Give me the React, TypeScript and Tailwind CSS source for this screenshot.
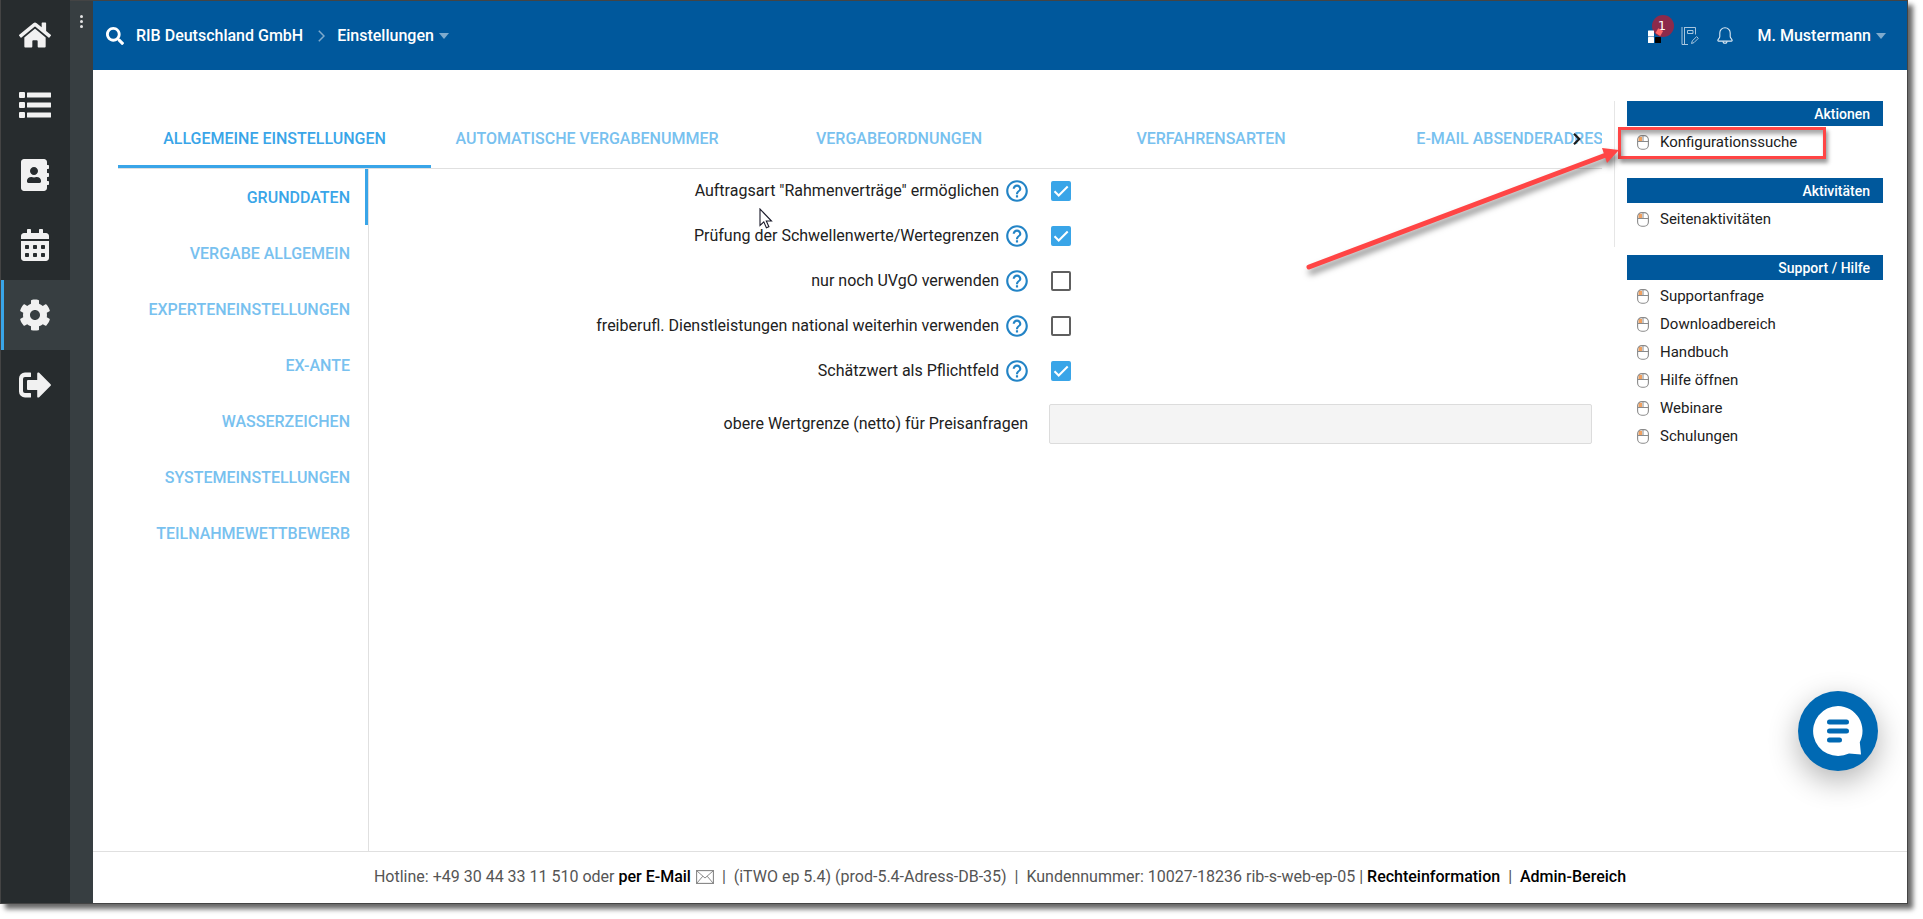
import React, { useState } from 'react';
import { FaAddressBook, FaCalendarAlt, FaCog, FaHome, FaSearch } from 'react-icons/fa';

const ListIcon: React.FC = () => (
  <svg className="size-8" viewBox="0 0 32 32" fill="currentColor">
    <rect x="0" y="3" width="6" height="6" rx="1" />
    <rect x="0" y="13" width="6" height="6" rx="1" />
    <rect x="0" y="23" width="6" height="6" rx="1" />
    <rect x="8" y="3.5" width="24" height="5" rx="0.5" />
    <rect x="8" y="13.5" width="24" height="5" rx="0.5" />
    <rect x="8" y="23.5" width="24" height="5" rx="0.5" />
  </svg>
);

const SignOutIcon: React.FC = () => (
  <svg className="size-8" viewBox="0 0 32 32" fill="currentColor">
    <path d="M12 4v3.400a.6.6 0 0 1-.6.6H6a2 2 0 0 0-2 2v12a2 2 0 0 0 2 2h5.400a.6.6 0 0 1 .6.6V28a.6.6 0 0 1-.6.6H6a6 6 0 0 1-6-6V9.400a6 6 0 0 1 6-6h5.400a.6.6 0 0 1 .6.6z" />
    <path d="M18.200 4.600v6.400H9a1 1 0 0 0-1 1v8a1 1 0 0 0 1 1h9.200v6.400c0 1.200 1.300 1.600 2 .8L31.600 16.800a1.200 1.200 0 0 0 0-1.600L20.200 3.800c-.7-.8-2-.4-2 .8z" />
  </svg>
);

const HelpIcon: React.FC = () => (
  <svg className="size-[26px]" viewBox="0 0 24 24" fill="currentColor">
    <path d="M11 18h2v-2h-2v2zm1-16C6.480 2 2 6.480 2 12s4.480 10 10 10 10-4.480 10-10S17.520 2 12 2zm0 18c-4.410 0-8-3.590-8-8s3.590-8 8-8 8 3.590 8 8-3.590 8-8 8zm0-14c-2.210 0-4 1.790-4 4h2c0-1.100.9-2 2-2s2 .9 2 2c0 2-3 1.750-3 5h2c0-2.250 3-2.500 3-5 0-2.210-1.790-4-4-4z" />
  </svg>
);

const MouseIcon: React.FC = () => (
  <svg className="h-[15px] w-3 shrink-0" viewBox="0 0 12 15" fill="none">
    <path d="M1.500 1.800H5V6H1.500z" fill="#f0a060" />
    <rect x="0.6" y="0.6" width="10.800" height="13.600" rx="4.200" stroke="#8a8a8a" strokeWidth="1.100" />
    <path d="M.6 6.500h10.800M6 .6v5.900" stroke="#8a8a8a" />
  </svg>
);

const AppsIcon: React.FC = () => (
  <svg className="h-7 w-[26px]" viewBox="0 0 26 28">
    <circle cx="15" cy="11" r="11" fill="#8c2a4b" />
    <rect x="0" y="15.500" width="6" height="6" rx="0.5" fill="#fff" />
    <rect x="0" y="22" width="6" height="6" rx="0.5" fill="#fff" />
    <rect x="7" y="22" width="6" height="6" rx="0.5" fill="#000" />
    <text x="14" y="15" textAnchor="middle" fontSize="13" fill="#fff" className="font-['DejaVu_Sans',sans-serif] font-normal">1</text>
    <rect x="8.500" y="14.300" width="5.600" height="5.600" transform="rotate(30 11.300 17.100)" fill="#ff6a6a" />
  </svg>
);

const NotebookIcon: React.FC = () => (
  <svg className="h-[18px] w-[18px]" viewBox="0 0 18 18" fill="none" stroke="#a9c6de">
    <path d="M1 0v17.500H7M3.500 0v17.500M3.500.5H14.500v7" />
    <path d="M6.500 3.500h5.500v3H6.500z" />
    <path d="M10.500 16.500l.8-2.600 4.300-4.300 1.700 1.700-4.300 4.300z" />
  </svg>
);

const BellIcon: React.FC = () => (
  <svg className="h-[18px] w-4" viewBox="0 0 16 18" fill="none" stroke="#dbe8f2" strokeWidth="1.100">
    <path d="M8 .8C4.800.8 2.800 3.200 2.800 6v3.500c0 1.600-2 2.600-2 4 0 .4.300.6.700.6h13c.4 0 .7-.2.7-.6 0-1.400-2-2.400-2-4V6C13.200 3.200 11.200.8 8 .8z" />
    <path d="M6 14.300a2 2 0 0 0 4 0" />
  </svg>
);

const Caret: React.FC = () => <span className="border-x-5 border-t-6 border-x-transparent border-t-[#7fabcd]" />;

const navItems = [
  { label: 'Startseite', icon: <FaHome className="size-8" /> },
  { label: 'Liste', icon: <ListIcon /> },
  { label: 'Adressbuch', icon: <FaAddressBook className="size-8" /> },
  { label: 'Kalender', icon: <FaCalendarAlt className="size-8" /> },
  { label: 'Einstellungen', icon: <FaCog className="size-8" />, active: true },
  { label: 'Abmelden', icon: <SignOutIcon /> },
];

const tabs = [
  'ALLGEMEINE EINSTELLUNGEN',
  'AUTOMATISCHE VERGABENUMMER',
  'VERGABEORDNUNGEN',
  'VERFAHRENSARTEN',
  'E-MAIL ABSENDERADRESSE',
];

const sections = [
  'GRUNDDATEN',
  'VERGABE ALLGEMEIN',
  'EXPERTENEINSTELLUNGEN',
  'EX-ANTE',
  'WASSERZEICHEN',
  'SYSTEMEINSTELLUNGEN',
  'TEILNAHMEWETTBEWERB',
];

const options = [
  { id: 'rahmen', label: 'Auftragsart "Rahmenverträge" ermöglichen', checked: true },
  { id: 'schwellen', label: 'Prüfung der Schwellenwerte/Wertegrenzen', checked: true },
  { id: 'uvgo', label: 'nur noch UVgO verwenden', checked: false },
  { id: 'freiberufl', label: 'freiberufl. Dienstleistungen national weiterhin verwenden', checked: false },
  { id: 'schaetzwert', label: 'Schätzwert als Pflichtfeld', checked: true },
];

const groups = [
  { title: 'Aktionen', links: ['Konfigurationssuche'], style: 'h-[77px] border-l border-[#e6e6e6] pl-3' },
  { title: 'Aktivitäten', links: ['Seitenaktivitäten'], style: 'mb-2 h-[69px] border-l border-[#e6e6e6] pl-3' },
  {
    title: 'Support / Hilfe',
    links: ['Supportanfrage', 'Downloadbereich', 'Handbuch', 'Hilfe öffnen', 'Webinare', 'Schulungen'],
    style: 'pl-[13px]',
  },
];

const Sidebar: React.FC = () => (
  <>
    <nav className="-mt-px w-[69px] shrink-0 bg-[#272c2e]">
      {navItems.map((item) => (
        <a
          key={item.label}
          href="#"
          aria-label={item.label}
          className={
            item.active
              ? 'flex h-[70px] items-center justify-center border-l-3 border-[#39a5e8] bg-[#373e41] pr-1 text-[#f1f1f1]'
              : 'flex h-[70px] items-center justify-center pr-px text-[#f1f1f1]'
          }
        >
          {item.icon}
        </a>
      ))}
    </nav>
    <div className="w-[23px] shrink-0 bg-[#373e41]">
      <button type="button" aria-label="Menü" className="flex w-full flex-col items-center gap-[2px] pt-[14px]">
        <span className="size-[3px] rounded-full bg-[#e4e4e4]" />
        <span className="size-[3px] rounded-full bg-[#e4e4e4]" />
        <span className="size-[3px] rounded-full bg-[#e4e4e4]" />
      </button>
    </div>
  </>
);

const Header: React.FC = () => (
  <header className="flex h-[69px] shrink-0 items-center justify-between bg-[#00589c] pr-[21px] pl-[13px] font-medium text-white">
    <div className="flex items-center">
      <button type="button" aria-label="Suche">
        <FaSearch className="size-[18px]" />
      </button>
      <a href="#" className="ml-3">RIB Deutschland GmbH</a>
      <svg className="mr-3 ml-[15px] h-3 w-[7px]" viewBox="0 0 7 12" fill="none" stroke="#7fabcd" strokeWidth="1.500">
        <path d="M.8.8L6 6 .8 11.200" />
      </svg>
      <button type="button" className="flex items-center gap-[5px]">
        Einstellungen
        <Caret />
      </button>
    </div>
    <div className="flex items-center">
      <button type="button" aria-label="Anwendungen" className="mr-[7px] -mt-[14px]">
        <AppsIcon />
      </button>
      <button type="button" aria-label="Protokoll" className="mr-[18px]">
        <NotebookIcon />
      </button>
      <button type="button" aria-label="Benachrichtigungen" className="mr-[25px]">
        <BellIcon />
      </button>
      <button type="button" className="flex items-center gap-[5px]">
        M. Mustermann
        <Caret />
      </button>
    </div>
  </header>
);

const TabBar: React.FC = () => (
  <div className="relative mt-[39px] flex h-[60px] shrink-0 overflow-hidden border-b border-[#e0e0e0]">
    {tabs.map((tab, i) => (
      <button
        key={tab}
        type="button"
        className={
          i === 0
            ? 'w-[313px] shrink-0 border-b-3 border-[#39a5e8] pt-1 font-medium text-[#39a5e8]'
            : 'w-78 shrink-0 border-b-3 border-transparent pt-1 font-medium whitespace-nowrap text-[#78c1ef] last-of-type:w-auto nth-5:w-76'
        }
      >
        {tab}
      </button>
    ))}
    <div className="absolute top-[24px] right-[21px] flex">
      <button type="button" aria-label="Weitere Reiter">
        <svg className="h-3 w-2" viewBox="0 0 8 12" fill="none" stroke="#1c1c1c" strokeWidth="2.200">
          <path d="M1 .8L6.200 6 1 11.200" />
        </svg>
      </button>
    </div>
  </div>
);

const SettingsForm: React.FC = () => {
  const [values, setValues] = useState<Record<string, boolean>>(
    Object.fromEntries(options.map((o) => [o.id, o.checked])),
  );

  return (
    <form className="-mt-px grow pr-[10px]">
      {options.map((o) => (
        <div key={o.id} className="grid h-[45px] grid-cols-[659fr_543fr] items-center gap-x-[21px]">
          <div className="-mr-[2px] flex items-center justify-end gap-[5px]">
            <label htmlFor={o.id}>{o.label}</label>
            <button type="button" aria-label="Hilfe" className="text-[#2384c6]">
              <HelpIcon />
            </button>
          </div>
          <span className="relative ml-[2px] flex size-5">
            <input
              id={o.id}
              type="checkbox"
              checked={values[o.id]}
              onChange={(e) => setValues({ ...values, [o.id]: e.target.checked })}
              className="peer size-5 appearance-none rounded-[2px] border-2 border-[#5f5f5f] checked:border-[#39a5e8] checked:bg-[#39a5e8]"
            />
            <svg
              className="pointer-events-none absolute inset-0 hidden size-5 peer-checked:block"
              viewBox="0 0 20 20"
              fill="none"
              stroke="#fff"
              strokeWidth="2"
            >
              <path d="M3.500 10.300l4.200 4.200 9-9" />
            </svg>
          </span>
        </div>
      ))}
      <div className="mt-[11px] grid grid-cols-[659fr_543fr] items-center gap-x-[21px]">
        <label htmlFor="wertgrenze" className="text-right">obere Wertgrenze (netto) für Preisanfragen</label>
        <input
          id="wertgrenze"
          type="text"
          className="h-10 w-full rounded-[2px] border border-[#dcdcdc] bg-[#f4f4f4] px-3"
        />
      </div>
    </form>
  );
};

// Red frame and arrow that point at one of the links
const Callout: React.FC = () => (
  <>
    <span className="pointer-events-none absolute -top-px -left-[9px] h-8 w-52 border-3 border-[#ff4545] shadow-[2px_4px_4px_rgba(0,0,0,0.4),inset_2px_4px_4px_rgba(0,0,0,0.35)]" />
    <svg
      className="pointer-events-none absolute -top-[2px] -left-[329px] h-[160px] w-[330px] drop-shadow-[2px_5px_3px_rgba(0,0,0,0.5)]"
      viewBox="0 0 330 160"
    >
      <path d="M11 141L308 29" stroke="#ff4545" strokeWidth="5" strokeLinecap="round" />
      <path d="M321 24L304 22 309 37z" fill="#ff4545" />
    </svg>
  </>
);

const Aside: React.FC = () => (
  <aside className="flex w-[269px] shrink-0 flex-col pt-[31px] text-[15px]">
    {groups.map((group) => (
      <section key={group.title} className={group.style}>
        <h2 className="h-[25px] bg-[#00589c] pt-px pr-[13px] text-right text-sm leading-[25px] font-medium text-white">{group.title}</h2>
        <ul className="pt-[2px]">
          {group.links.map((link) => (
            <li key={link} className="relative">
              <a href="#" className="flex h-7 items-center gap-[11px] pl-[10px]">
                <MouseIcon />
                {link}
              </a>
              {link === 'Konfigurationssuche' && <Callout />}
            </li>
          ))}
        </ul>
      </section>
    ))}
  </aside>
);

const Footer: React.FC = () => (
  <footer className="flex h-[52px] shrink-0 items-center justify-center border-t border-[#e0e0e0] pb-px whitespace-pre text-[#555]">
    Hotline: +49 30 44 33 11 510 oder <a href="#" className="font-medium text-black">per E-Mail</a>
    <svg className="ml-[5px] h-[14px] w-[18px]" viewBox="0 0 18 14" fill="none" stroke="#8a8a8a">
      <rect x="0.5" y="0.5" width="17" height="13" strokeWidth="1.300" />
      <path d="M1 1l8 7 8-7M1 13l5.800-6.800M17 13l-5.800-6.800" />
    </svg>
    {'  |  (iTWO ep 5.4) (prod-5.4-Adress-DB-35)  |  Kundennummer: 10027-18236 rib-s-web-ep-05 | '}
    <a href="#" className="font-medium text-black">Rechteinformation</a>
    {'  |  '}
    <a href="#" className="font-medium text-black">Admin-Bereich</a>
  </footer>
);

const App: React.FC = () => (
  <div className="flex min-h-screen bg-white pr-[15px] pb-[15px] font-[Roboto,sans-serif] text-base text-[#212121]">
    <div className="relative flex min-w-0 grow border border-[#444] bg-white shadow-[5px_5px_5px_rgba(0,0,0,0.6)]">
      <Sidebar />
      <div className="flex min-w-0 grow flex-col">
        <Header />
        <div className="flex grow pr-6 pl-[25px]">
          <main className="mr-3 flex min-w-0 grow flex-col">
            <TabBar />
            <div className="flex grow">
              <nav className="w-[251px] shrink-0 border-r border-[#e0e0e0]">
                {sections.map((section, i) => (
                  <a
                    key={section}
                    href="#"
                    className={
                      i === 0
                        ? 'flex h-14 items-center justify-end border-r-3 border-[#39a5e8] pt-px pr-[15px] font-medium text-[#39a5e8]'
                        : 'flex h-14 items-center justify-end pt-[2px] pr-[18px] font-medium text-[#78c1ef]'
                    }
                  >
                    {section}
                  </a>
                ))}
              </nav>
              <SettingsForm />
            </div>
          </main>
          <Aside />
        </div>
        <Footer />
      </div>
      <button
        type="button"
        aria-label="Chat"
        className="absolute right-[29px] bottom-[132px] size-20 rounded-full bg-[#0069b3] shadow-[0_10px_30px_rgba(0,0,0,0.3)]"
      >
        <svg className="size-20" viewBox="0 0 80 80">
          <path d="M40 15a25 25 0 1 0 11 47.500L63 63.500l-1.200-12.200A25 25 0 0 0 40 15z" fill="#fff" />
          <path d="M31.500 31h17M31.500 40h17M31.500 49h10" stroke="#0069b3" strokeWidth="5" strokeLinecap="round" />
        </svg>
      </button>
      <svg className="pointer-events-none absolute top-[207px] left-[758px] h-[21px] w-[14px]" viewBox="0 0 14 21">
        <path
          d="M1 1v16.500l3.800-3.600 2.600 5.900 2.500-1.100-2.600-5.700h5.200z"
          fill="#fff"
          stroke="#1a1a2a"
          strokeWidth="1.100"
        />
      </svg>
    </div>
  </div>
);

export default App;
